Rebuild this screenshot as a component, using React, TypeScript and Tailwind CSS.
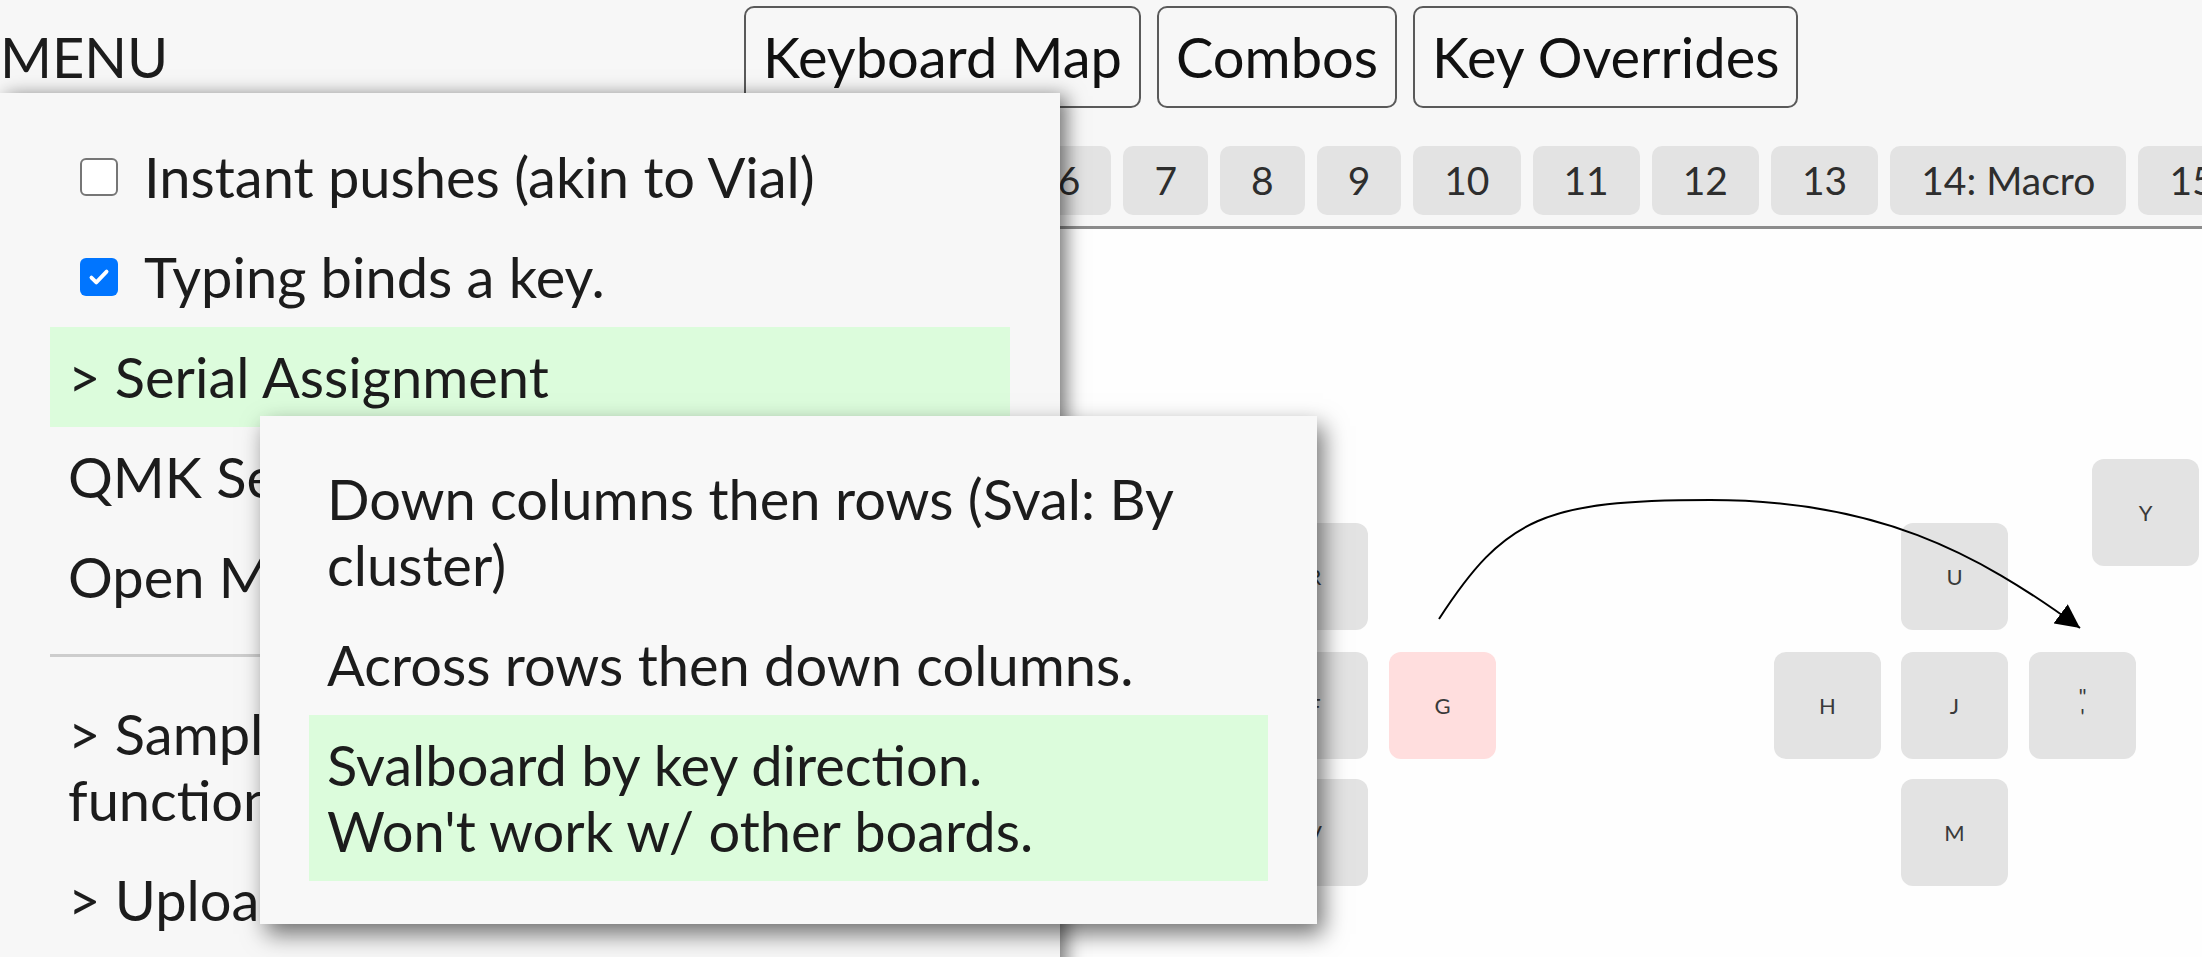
import React from 'react';

const tabs = ['0', '1', '2', '3', '4', '5', '6', '7', '8', '9', '10', '11', '12', '13', '14: Macro', '15', '16'];

interface KeyProps {
  x: number;
  y: number;
  label: React.ReactNode;
  hot?: boolean;
}

// keys sit on a free canvas, so each one carries its own spot
const Key: React.FC<KeyProps> = ({ x, y, label, hot }) => (
  <div
    className={`absolute w-[107px] h-[107px] rounded-[12px] flex items-center justify-center text-[22px] leading-[22px] text-[#3a3a3a] text-center ${hot ? 'bg-[#ffdede]' : 'bg-[#e3e3e3]'}`}
    style={{ left: x, top: y }}
  >
    {label}
  </div>
);

const Check: React.FC<{ checked?: boolean }> = ({ checked }) =>
  checked ? (
    <span className="ml-[12px] mr-[26px] w-[38px] h-[38px] shrink-0 rounded-[6px] bg-[#0075ff] flex items-center justify-center">
      <svg width="26" height="26" viewBox="0 0 24 24" fill="none" stroke="white" strokeWidth="3.5" strokeLinecap="round" strokeLinejoin="round">
        <path d="M5 12.5l4.5 4.5L19 7" />
      </svg>
    </span>
  ) : (
    <span className="ml-[12px] mr-[26px] w-[38px] h-[38px] shrink-0 rounded-[6px] bg-white border-[2px] border-[#767676]" />
  );

export default function App() {
  return (
    <div className="relative w-[2202px] h-[957px] overflow-hidden bg-[#f7f7f7] text-[#1c1c1c] font-['Lato','Noto_Sans',sans-serif] flex flex-col">
      {/* header */}
      <div className="flex items-start pt-[6px] h-[146px]">
        <div className="w-[744px] text-[56px] leading-[102px]">MENU</div>
        <div className="flex gap-[16px]">
          {['Keyboard Map', 'Combos', 'Key Overrides'].map((b) => (
            <button
              key={b}
              className="h-[102px] px-[17px] border-[2px] border-[#5a5a5a] rounded-[10px] text-[56px] leading-[64px] text-[#111]"
            >
              {b}
            </button>
          ))}
        </div>
      </div>

      {/* layer tabs */}
      <div className="flex gap-[12px] pl-[447px] h-[69px]">
        {tabs.map((t) => (
          <div
            key={t}
            className="shrink-0 h-[69px] px-[31px] rounded-[10px] bg-[#e3e3e3] text-[39px] leading-[69px] text-[#2e2e2e] whitespace-nowrap"
          >
            {t}
          </div>
        ))}
      </div>
      <div className="mt-[11px] h-[3px] bg-[#8c8c8c]" />

      {/* keyboard canvas */}
      <div className="relative flex-1 bg-[#fefefe]">
        <Key x={1261} y={294} label="R" />
        <Key x={1261} y={423} label="F" />
        <Key x={1261} y={550} label="V" />
        <Key x={1389} y={423} label="G" hot />
        <Key x={2092} y={230} label="Y" />
        <Key x={1901} y={294} label="U" />
        <Key x={1774} y={423} label="H" />
        <Key x={1901} y={423} label="J" />
        <Key
          x={2029}
          y={423}
          label={
            <span className="flex flex-col leading-[20px]">
              <span>"</span>
              <span>'</span>
            </span>
          }
        />
        <Key x={1901} y={550} label="M" />

        <svg className="absolute inset-0 w-full h-full pointer-events-none" viewBox="0 0 2202 728" width="2202" height="728">
          <defs>
            <marker id="arrow" viewBox="0 0 10 10" refX="10" refY="5" markerWidth="12" markerHeight="12" orient="auto-start-reverse">
              <path d="M0 0L10 5L0 10z" fill="#000" />
            </marker>
          </defs>
          <path
            d="M1439 390C1505 288 1545 271 1710 271S1975 322 2080 399"
            fill="none"
            stroke="#000"
            strokeWidth="2"
            markerEnd="url(#arrow)"
          />
        </svg>
      </div>

      {/* main menu */}
      <div className="absolute left-0 top-[93px] w-[1060px] h-[900px] bg-[#f7f7f7] pt-[34px] px-[50px] shadow-[6px_3px_18px_rgba(0,0,0,0.55)] text-[56px] leading-[66px]">
        <div className="flex items-center px-[18px] py-[17px]">
          <Check />
          <span>Instant pushes (akin to Vial)</span>
        </div>
        <div className="flex items-center px-[18px] py-[17px]">
          <Check checked />
          <span>Typing binds a key.</span>
        </div>
        <div className="px-[18px] py-[17px] bg-[#dcfcdc]">&gt; Serial Assignment</div>
        <div className="px-[18px] py-[17px]">QMK Settings</div>
        <div className="px-[18px] py-[17px]">Open Macros</div>
        <div className="my-[27px] h-[3px] bg-[#cdcdcd]" />
        <div className="px-[18px] py-[17px]">&gt; Sample layouts and keymap functions</div>
        <div className="px-[18px] py-[17px]">&gt; Upload / Download</div>
      </div>

      {/* serial assignment submenu */}
      <div className="absolute left-[260px] top-[416px] w-[1057px] h-[508px] bg-[#f8f8f8] pt-[33px] px-[49px] shadow-[6px_10px_22px_rgba(0,0,0,0.55)] text-[56px] leading-[66px]">
        <div className="px-[18px] py-[17px]">Down columns then rows (Sval: By cluster)</div>
        <div className="px-[18px] py-[17px]">Across rows then down columns.</div>
        <div className="px-[18px] py-[17px] bg-[#dcfcdc]">
          Svalboard by key direction.
          <br />
          Won't work w/ other boards.
        </div>
      </div>
    </div>
  );
}
